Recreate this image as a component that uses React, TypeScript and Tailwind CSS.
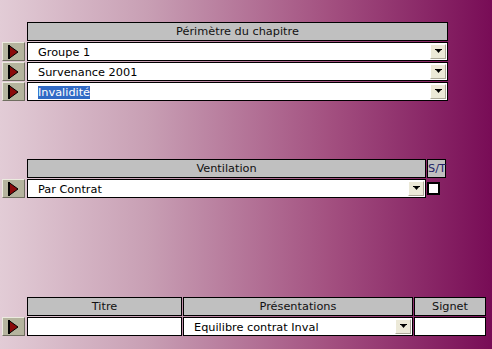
import React from "react";

const font = "font-['DejaVu_Sans',Verdana,sans-serif]";

function RowButton() {
  return (
    <div className="w-[23px] h-[19px] shrink-0 bg-[#b5b49e] border-t border-l border-[#ebeadf] border-r-[#6f6e60] border-b-[#6f6e60] border-r border-b flex items-center justify-center">
      <svg width="11" height="14" viewBox="0 0 11 14">
        <polygon points="1,0.5 1,13.5 10,7" fill="#8a0a0a" stroke="#000" strokeWidth="1" />
        <rect x="0" y="0" width="2" height="14" fill="#000" />
      </svg>
    </div>
  );
}

function DropBtn() {
  return (
    <div className="w-[16px] h-[15px] my-[1px] mr-[1px] shrink-0 bg-[#ece9d8] border-t border-l border-white border-r border-b border-r-[#aca899] border-b-[#aca899] flex items-center justify-center">
      <svg width="7" height="5" viewBox="0 0 7 5">
        <rect x="0" y="0" width="7" height="1" fill="#000" />
        <polygon points="1,1 6,1 3.5,4" fill="#000" />
      </svg>
    </div>
  );
}

function Select({ w, children }: { w: string; children: React.ReactNode }) {
  return (
    <div className={`${w} h-[19px] shrink-0 bg-white border border-black flex items-stretch`}>
      <div className="flex-1 pl-[10px] pt-[1px] text-[11.3px] leading-[17px] text-black whitespace-nowrap overflow-hidden">{children}</div>
      <DropBtn />
    </div>
  );
}

function Header({ w, children }: { w: string; children?: React.ReactNode }) {
  return (
    <div className={`${w} h-[19px] shrink-0 bg-[#c0c0c0] border border-black text-center text-[11.3px] leading-[17px] text-[#111] whitespace-nowrap`}>
      {children}
    </div>
  );
}

export default function App() {
  return (
    <div className={`w-[492px] h-[349px] overflow-hidden bg-[linear-gradient(to_right,#e2ccd6,#c89fb4_30%,#a35080_67%,#780c56)] pt-[22px] ${font}`}>
      {/* Section 1 */}
      <div className="flex flex-col gap-[1px]">
        <div className="flex pl-[27px]">
          <Header w="w-[421px]">Périmètre du chapitre</Header>
        </div>
        <div className="flex gap-[2px] pl-[2px]">
          <RowButton />
          <Select w="w-[421px]">Groupe 1</Select>
        </div>
        <div className="flex gap-[2px] pl-[2px]">
          <RowButton />
          <Select w="w-[421px]">Survenance 2001</Select>
        </div>
        <div className="flex gap-[2px] pl-[2px]">
          <RowButton />
          <Select w="w-[421px]">
            <span className="bg-[#316ac5] text-white">Invalidité</span>
          </Select>
        </div>
      </div>

      {/* Section 2 */}
      <div className="flex flex-col gap-[1px] mt-[58px]">
        <div className="flex pl-[27px] gap-[1px]">
          <Header w="w-[399px]">Ventilation</Header>
          <div className="w-[19px] h-[19px] shrink-0 bg-[#c0c0c0] border border-black text-[11.3px] leading-[17px] text-[#222266] whitespace-nowrap overflow-visible">
            S/T
          </div>
        </div>
        <div className="flex gap-[2px] pl-[2px]">
          <RowButton />
          <Select w="w-[399px]">Par Contrat</Select>
          <div className="w-[13px] h-[13px] mt-[3px] -ml-[1px] bg-white border-2 border-black" />
        </div>
      </div>

      {/* Section 3 */}
      <div className="flex flex-col gap-[1px] mt-[99px]">
        <div className="flex pl-[27px] gap-[1px]">
          <Header w="w-[155px]">Titre</Header>
          <Header w="w-[230px]">Présentations</Header>
          <Header w="w-[72px]">Signet</Header>
        </div>
        <div className="flex gap-[2px] pl-[2px]">
          <RowButton />
          <div className="flex gap-[1px]">
            <div className="w-[155px] h-[19px] bg-white border border-black" />
            <Select w="w-[230px]">Equilibre contrat Inval</Select>
            <div className="w-[72px] h-[19px] bg-white border border-black" />
          </div>
        </div>
      </div>
    </div>
  );
}
